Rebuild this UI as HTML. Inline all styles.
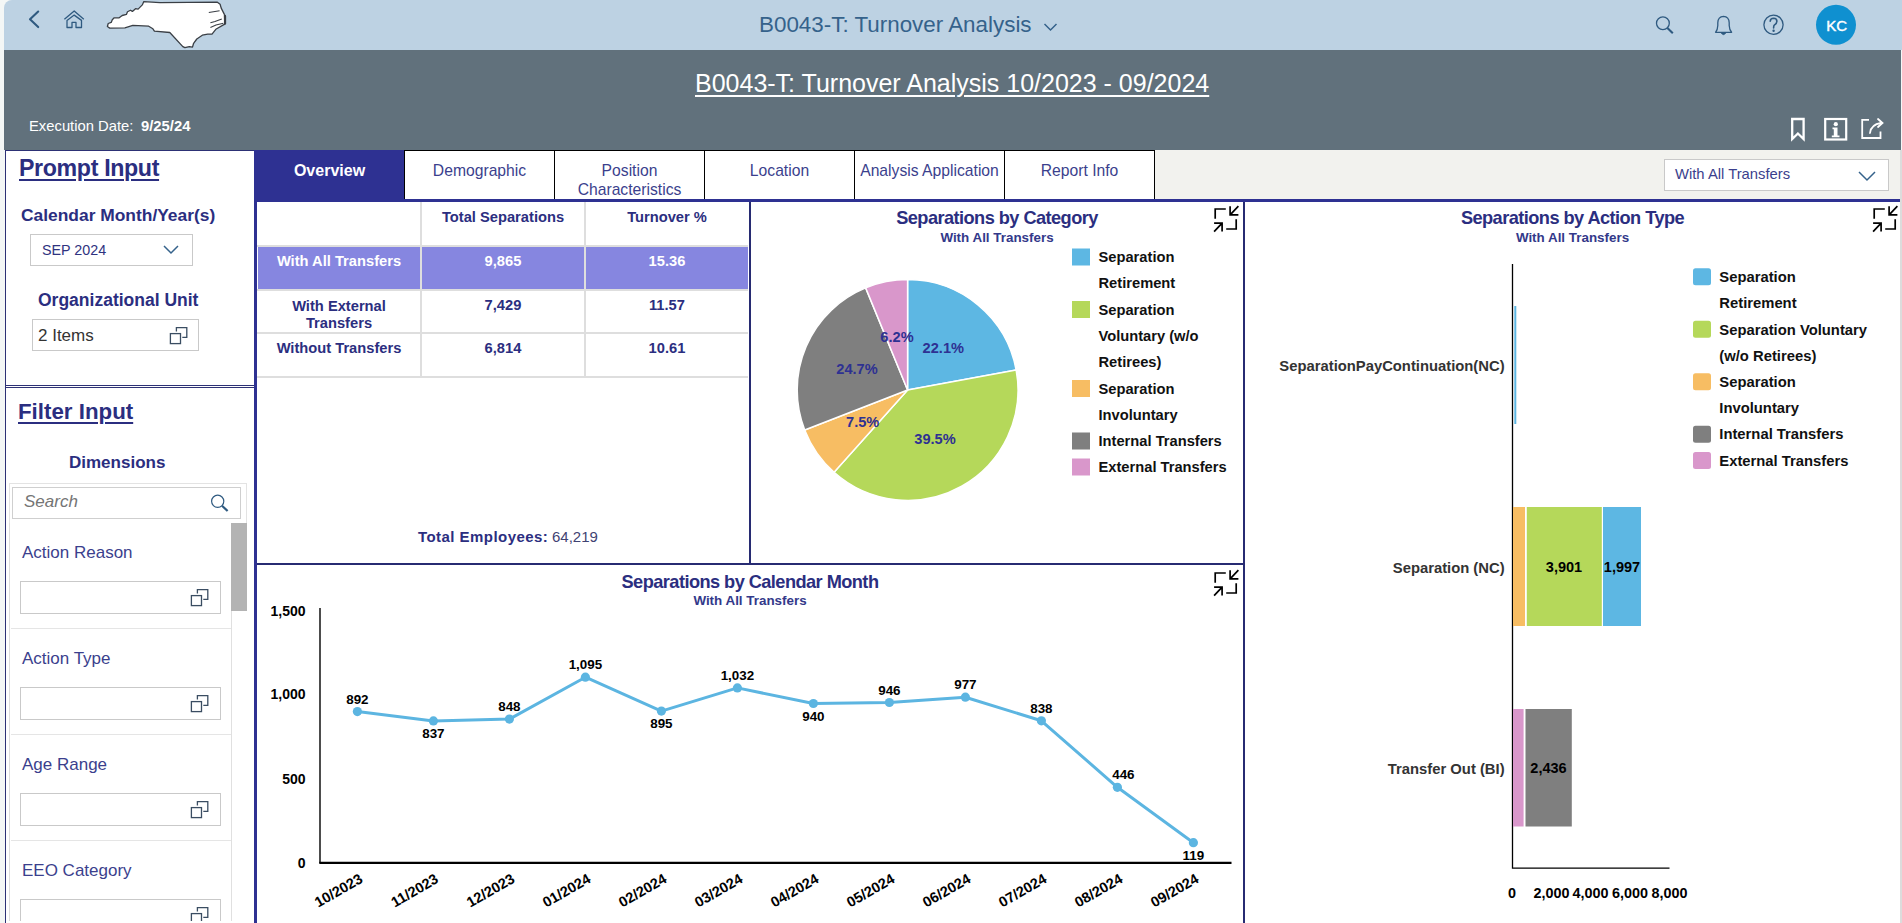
<!DOCTYPE html>
<html><head><meta charset="utf-8">
<style>
*{box-sizing:border-box;margin:0;padding:0}
html,body{width:1902px;height:923px;overflow:hidden;background:#f4f7f6;font-family:"Liberation Sans",sans-serif;position:relative}
.abs{position:absolute}
.t{position:absolute;white-space:nowrap;line-height:1}
#shell{left:4px;top:0;width:1898px;height:50px;background:#bdd2e3;border-top-left-radius:8px}
#band{left:4px;top:50px;width:1897px;height:100px;background:#61717c}
#left{left:5px;top:150px;width:250px;height:773px;background:#fff;border-left:1px solid #2d3175;border-top:1px solid #2d3175}
#tabbar{left:255px;top:150px;width:1646px;height:49px;background:#f2f2ee}
.tab{position:absolute;top:150px;width:151px;height:49px;background:#fff;border:1px solid #000;border-bottom:none;color:#3b3f8d;font-size:15.7px;text-align:center;line-height:19px;padding-top:10px}
#content{left:254px;top:199px;width:1648px;height:724px;background:#fff;border-top:3px solid #2e3192;border-left:3px solid #2e3192}
.db{color:#2b2e80}
.hl{font-weight:bold;color:#2b2e80;text-decoration:underline;text-decoration-thickness:2px;text-underline-offset:3px}
.box{position:absolute;background:#fff;border:1px solid #c9c9c9}
.sep{position:absolute;height:1px;background:#e5e5e5}
.lbl{font-size:17px;color:#3b3f8d}
</style></head><body>
<!-- shell header -->
<div id="shell" class="abs"></div>
<svg class="abs" style="left:0;top:0" width="1902" height="50">
  <path d="M38.2 11.5 L30 19.3 L38.2 27.1" fill="none" stroke="#2f5a80" stroke-width="2.1" stroke-linecap="round" stroke-linejoin="round"/>
  <path d="M64.4 19.2 L74.2 11 L83.8 19.2 M67 27.5 V20.4 L74.2 15.1 L81.5 20.4 V27.5 H76 V22.4 H72 V27.5 Z" fill="none" stroke="#2f5a80" stroke-width="1.3" stroke-linejoin="round"/>
  <path d="M143.8 1.6 L160 2.6 L217.4 2.2 L220.1 4.3 L221.2 8.1 L224.5 14.6 L225.5 16.3 L225.5 23.8 L223.4 24.9 L215.8 29.3 L212 34.1 L207.7 34.1 L202.3 35.2 L196.8 39 L193.6 43.3 L192.5 47.1 L189.3 46.6 L184.9 47.7 L182.8 46.6 L169.8 32.5 L154.4 31.1 L152.9 28.8 L148.7 26.2 L132.8 25.4 L124.9 27.9 L109.7 28.1 L107.4 26.5 L108.2 23.5 L111.2 22.4 L112.3 19.7 L114.2 17.8 L119.2 17.8 L122.2 15.5 L126.4 14.4 L127.5 11.8 L130.5 10.2 L132.4 11.4 L135.5 8.7 L138.1 9.1 L142.3 4.9 Z" fill="#fff" stroke="#3a3f45" stroke-width="1.3" stroke-linejoin="round"/>
  <path d="M208.8 12.5 L219.6 10.8 M210.4 22.8 L215 21.5 L221.8 19 M210.4 27.6 L216 25 L223.4 23.3" fill="none" stroke="#3a3f45" stroke-width="1.1"/>
  <path d="M224.8 15 L225 24" stroke="#3a3f45" stroke-width="2"/>
  <circle cx="1662.9" cy="23.3" r="6.4" fill="none" stroke="#2f5a80" stroke-width="1.3"/>
  <path d="M1667.4 28 L1672.8 33.2" stroke="#2f5a80" stroke-width="2.1" stroke-linecap="butt"/>
  <path d="M1715.6 32.3 L1731.6 32.3 Q1729.4 30 1729.2 25.5 L1729.2 22.8 Q1729 16.5 1723.5 16.3 Q1718 16.5 1717.8 22.8 L1717.8 25.5 Q1717.6 30 1715.6 32.3 Z" fill="none" stroke="#2f5a80" stroke-width="1.3" stroke-linejoin="round"/>
  <path d="M1721.3 33 Q1723.5 36.3 1725.7 33 Z" fill="#2f5a80" stroke="#2f5a80" stroke-width="0.8"/>
  <circle cx="1773.5" cy="24.75" r="9.6" fill="none" stroke="#2f5a80" stroke-width="1.3"/>
  <path d="M1770.2 21.3 Q1770.4 18.3 1773.6 18.3 Q1776.9 18.4 1776.9 21.2 Q1776.9 23.4 1774.3 25.2 Q1773.6 25.8 1773.6 28" fill="none" stroke="#2f5a80" stroke-width="1.6" stroke-linecap="round"/>
  <circle cx="1773.6" cy="30.8" r="1.2" fill="#2f5a80"/>
  <circle cx="1836" cy="24.8" r="20" fill="#0f90d0"/>
</svg>
<div class="t" style="left:759px;top:13.5px;font-size:22.4px;color:#35628b">B0043-T: Turnover Analysis</div>
<svg class="abs" style="left:1043px;top:21.5px" width="16" height="10"><path d="M1.5 2 L7.5 8 L13.5 2" fill="none" stroke="#35628b" stroke-width="1.5"/></svg>
<div class="t" style="left:1826.3px;top:18.2px;font-size:15px;color:#fff;-webkit-text-stroke:0.4px #fff">KC</div>

<!-- band -->
<div id="band" class="abs"></div>
<div class="t" style="left:695px;top:71px;font-size:25px;color:#fff;text-decoration:underline;text-decoration-thickness:2px;text-underline-offset:3px">B0043-T: Turnover Analysis 10/2023 - 09/2024</div>
<div class="t" style="left:29px;top:118.5px;font-size:14.8px;color:#fff">Execution Date:</div>
<div class="t" style="left:141px;top:118.5px;font-size:14.8px;font-weight:bold;color:#fff">9/25/24</div>
<svg class="abs" style="left:1780px;top:110px" width="122" height="40">
  <path d="M12.2 9 H23.6 V29 L17.9 23.5 L12.2 29 Z" fill="none" stroke="#fff" stroke-width="2.3"/>
  <rect x="45.2" y="9" width="21" height="20.5" fill="none" stroke="#fff" stroke-width="2.2"/>
  <circle cx="55.8" cy="14.2" r="2.1" fill="#fff"/>
  <path d="M52.5 17.5 H57.5 V25.5 H59.5 V27.2 H51.8 V25.5 H53.8 V19.2 H52.5 Z" fill="#fff"/>
  <path d="M89 9.8 H82.2 V28 H100.5 V21.5" fill="none" stroke="#fff" stroke-width="1.8"/>
  <path d="M90 23 Q91 14.5 101 13" fill="none" stroke="#fff" stroke-width="1.8" stroke-linecap="round"/>
  <path d="M98 9 L102.5 13 L98 17" fill="none" stroke="#fff" stroke-width="1.8" stroke-linecap="round"/>
</svg>

<!-- left panel -->
<div id="left" class="abs"></div>
<div class="t hl" style="left:19px;top:157px;font-size:23.2px;letter-spacing:-0.35px">Prompt Input</div>
<div class="t" style="left:21px;top:207px;font-size:17.4px;font-weight:bold;color:#2b2e80">Calendar Month/Year(s)</div>
<div class="box" style="left:30px;top:234px;width:163px;height:32px"></div>
<div class="t" style="left:42px;top:242.5px;font-size:14.3px;color:#2f3380">SEP 2024</div>
<svg class="abs" style="left:162px;top:243px" width="20" height="14"><path d="M2 3 L9 10 L16 3" fill="none" stroke="#35628b" stroke-width="1.5"/></svg>
<div class="t" style="left:38px;top:292px;font-size:17.5px;font-weight:bold;color:#2b2e80">Organizational Unit</div>
<div class="box" style="left:32px;top:319px;width:167px;height:32px"></div>
<div class="t" style="left:38px;top:327px;font-size:17px;color:#333">2 Items</div>

<div class="abs" style="left:6px;top:385px;width:249px;height:1px;background:#2d3175"></div>
<div class="abs" style="left:6px;top:387px;width:249px;height:1px;background:#2d3175"></div>
<div class="t hl" style="left:18px;top:401.3px;font-size:22.3px">Filter Input</div>
<div class="t" style="left:69px;top:454px;font-size:17px;font-weight:bold;color:#2b2e80">Dimensions</div>
<div class="abs" style="left:9px;top:483px;width:238px;height:40px;border:1px solid #e3e3e3;border-bottom:none;background:#fff"></div>
<div class="abs" style="left:9px;top:523px;width:1px;height:398px;background:#dcdcdc"></div>
<div class="box" style="left:12px;top:487px;width:229px;height:32px;border-color:#cfcfcf"></div>
<div class="t" style="left:24px;top:493px;font-size:17px;font-style:italic;color:#757575">Search</div>
<svg class="abs" style="left:206px;top:491px" width="26" height="26"><circle cx="11.7" cy="10.3" r="6.1" fill="none" stroke="#2f5a80" stroke-width="1.2"/><path d="M16 14.8 L21.6 20" stroke="#2f5a80" stroke-width="2.2" stroke-linecap="butt"/></svg>
<div class="abs" style="left:231px;top:523px;width:16px;height:88px;background:#b3b3b3"></div>
<div class="abs" style="left:231px;top:611px;width:1px;height:312px;background:#e0e0e0"></div>

<div class="t lbl" style="left:22px;top:544px">Action Reason</div>
<div class="box" style="left:20px;top:581px;width:201px;height:33px"></div>
<div class="sep" style="left:11px;top:628px;width:220px"></div>
<div class="t lbl" style="left:22px;top:650px">Action Type</div>
<div class="box" style="left:20px;top:687px;width:201px;height:33px"></div>
<div class="sep" style="left:11px;top:734px;width:220px"></div>
<div class="t lbl" style="left:22px;top:756px">Age Range</div>
<div class="box" style="left:20px;top:793px;width:201px;height:33px"></div>
<div class="sep" style="left:11px;top:840px;width:220px"></div>
<div class="t lbl" style="left:22px;top:862px">EEO Category</div>
<div class="box" style="left:20px;top:899px;width:201px;height:33px;border-bottom:none"></div>
<svg class="abs" style="left:0;top:0" width="260" height="921">
  <g fill="none" stroke="#3a4d62" stroke-width="1.3">
<path d="M197.4 593.4 V589.6 H207.8 V599.4 H203.3"/><rect x="191.4" y="595.6" width="10.1" height="10"/>
<path d="M197.4 699.4 V695.6 H207.8 V705.4 H203.3"/><rect x="191.4" y="701.6" width="10.1" height="10"/>
<path d="M197.4 805.4 V801.6 H207.8 V811.4 H203.3"/><rect x="191.4" y="807.6" width="10.1" height="10"/>
<path d="M197.4 911.4 V907.6 H207.8 V917.4 H203.3"/><rect x="191.4" y="913.6" width="10.1" height="10"/>
<path d="M176.4 331.4 V327.6 H186.8 V337.4 H182.3"/><rect x="170.4" y="333.6" width="10.1" height="10"/>
  </g>
</svg>

<div class="abs" style="left:6px;top:921px;width:248px;height:2px;background:#fff"></div>
<!-- tabs -->
<div id="tabbar" class="abs"></div>
<div id="content" class="abs"></div>
<div class="tab" style="left:254px;background:#2e3192;color:#fff;font-weight:bold;font-size:16px;border-color:#2e3192">Overview</div>
<div class="tab" style="left:404px">Demographic</div>
<div class="tab" style="left:554px">Position<br>Characteristics</div>
<div class="tab" style="left:704px">Location</div>
<div class="tab" style="left:854px">Analysis Application</div>
<div class="tab" style="left:1004px">Report Info</div>
<div class="box" style="left:1664px;top:159px;width:225px;height:32px;border-color:#c9c9c9"></div>
<div class="t" style="left:1675px;top:167px;font-size:14.8px;color:#3b3f8d">With All Transfers</div>
<svg class="abs" style="left:1856px;top:168px" width="22" height="16"><path d="M3 4 L11 12 L19 4" fill="none" stroke="#35628b" stroke-width="1.5"/></svg>


<!-- panel borders -->
<div class="abs" style="left:749px;top:202px;width:2px;height:363px;background:#272b72"></div>
<div class="abs" style="left:1243px;top:202px;width:2px;height:721px;background:#272b72"></div>
<div class="abs" style="left:257px;top:563px;width:988px;height:2px;background:#272b72"></div>
<div class="abs" style="left:1900px;top:150px;width:2px;height:773px;background:#dcdcdc"></div>

<!-- table -->
<div class="abs" style="left:257px;top:245px;width:491px;height:2px;background:#dedede"></div>
<div class="abs" style="left:257px;top:289px;width:491px;height:2px;background:#dedede"></div>
<div class="abs" style="left:257px;top:332px;width:491px;height:2px;background:#dedede"></div>
<div class="abs" style="left:257px;top:376px;width:491px;height:2px;background:#dedede"></div>
<div class="abs" style="left:420px;top:202px;width:2px;height:176px;background:#dedede"></div>
<div class="abs" style="left:584px;top:202px;width:2px;height:176px;background:#dedede"></div>
<div class="abs" style="left:258px;top:247px;width:162px;height:42px;background:#8686e0"></div>
<div class="abs" style="left:422px;top:247px;width:162px;height:42px;background:#8686e0"></div>
<div class="abs" style="left:586px;top:247px;width:162px;height:42px;background:#8686e0"></div>
<div style="position:absolute;left:0;top:0;font-weight:bold;font-size:14.7px;color:#2b2e80">
<div class="t" style="left:421px;width:164px;text-align:center;top:210px">Total Separations</div>
<div class="t" style="left:585px;width:164px;text-align:center;top:210px">Turnover %</div>
<div class="t" style="left:257px;width:164px;text-align:center;top:254px;color:#fff">With All Transfers</div>
<div class="t" style="left:421px;width:164px;text-align:center;top:254px;color:#fff">9,865</div>
<div class="t" style="left:585px;width:164px;text-align:center;top:254px;color:#fff">15.36</div>
<div class="t" style="left:257px;width:164px;text-align:center;top:298px;line-height:17px;white-space:normal">With External<br>Transfers</div>
<div class="t" style="left:421px;width:164px;text-align:center;top:298px">7,429</div>
<div class="t" style="left:585px;width:164px;text-align:center;top:298px">11.57</div>
<div class="t" style="left:257px;width:164px;text-align:center;top:341px">Without Transfers</div>
<div class="t" style="left:421px;width:164px;text-align:center;top:341px">6,814</div>
<div class="t" style="left:585px;width:164px;text-align:center;top:341px">10.61</div>
</div>
<div class="t" style="left:418px;top:529px;font-size:15px;font-weight:bold;color:#2b2e80;letter-spacing:0.45px">Total Employees:</div>
<div class="t" style="left:552px;top:529px;font-size:15px;color:#3f4272">64,219</div>

<!-- collapse icons -->
<svg class="abs" style="left:0;top:0" width="1902" height="923">
<defs><g id="col"><path d="M1.2 12.8 V3 H11.8 M16.1 0.2 V8.9 H24.4 M16.1 8.9 L24.4 0.2 M0.1 17.1 H8.1 V25.6 M8.1 17.1 L0.1 25.6 M22.2 13.2 V23 H12.2" fill="none" stroke="#000" stroke-width="1.7"/></g></defs>
<use href="#col" x="1214" y="206"/>
<use href="#col" x="1214" y="570"/>
<use href="#col" x="1873" y="206"/>
</svg>

<!-- chart titles -->
<div class="t" style="left:751px;width:492px;text-align:center;top:209px;font-size:18.2px;letter-spacing:-0.55px;font-weight:bold;color:#2b2e80">Separations by Category</div>
<div class="t" style="left:751px;width:492px;text-align:center;top:231px;font-size:13.4px;font-weight:bold;color:#33398a">With All Transfers</div>
<div class="t" style="left:257px;width:986px;text-align:center;top:573px;font-size:18.2px;letter-spacing:-0.55px;font-weight:bold;color:#2b2e80">Separations by Calendar Month</div>
<div class="t" style="left:257px;width:986px;text-align:center;top:594px;font-size:13.4px;font-weight:bold;color:#33398a">With All Transfers</div>
<div class="t" style="left:1245px;width:655px;text-align:center;top:209px;font-size:18.2px;letter-spacing:-0.55px;font-weight:bold;color:#2b2e80">Separations by Action Type</div>
<div class="t" style="left:1245px;width:655px;text-align:center;top:231px;font-size:13.4px;font-weight:bold;color:#33398a">With All Transfers</div>

<!-- pie -->
<svg class="abs" style="left:0;top:0" width="1902" height="923" font-family="Liberation Sans" font-weight="bold">
<path d="M907.6 390 L907.60 279.60 A110.4 110.4 0 0 1 1016.17 369.99 Z" fill="#5db7e3" stroke="#fff" stroke-width="1.5" stroke-linejoin="round"/>
<path d="M907.6 390 L1016.17 369.99 A110.4 110.4 0 0 1 834.07 472.35 Z" fill="#b5d85a" stroke="#fff" stroke-width="1.5" stroke-linejoin="round"/>
<path d="M907.6 390 L834.07 472.35 A110.4 110.4 0 0 1 804.70 430.00 Z" fill="#f7bd63" stroke="#fff" stroke-width="1.5" stroke-linejoin="round"/>
<path d="M907.6 390 L804.70 430.00 A110.4 110.4 0 0 1 865.67 287.87 Z" fill="#7f7f7f" stroke="#fff" stroke-width="1.5" stroke-linejoin="round"/>
<path d="M907.6 390 L865.67 287.87 A110.4 110.4 0 0 1 907.60 279.60 Z" fill="#d997cb" stroke="#fff" stroke-width="1.5" stroke-linejoin="round"/>
<g fill="#2e3192" font-size="14.6" text-anchor="middle">
<text x="943.3" y="353">22.1%</text>
<text x="935" y="444">39.5%</text>
<text x="862.7" y="427">7.5%</text>
<text x="857" y="374">24.7%</text>
<text x="897" y="342">6.2%</text>
</g>
<g font-size="14.7" fill="#111">
<rect x="1072" y="248.5" width="18" height="17" fill="#5db7e3"/>
<text x="1098.5" y="262">Separation</text><text x="1098.5" y="288">Retirement</text>
<rect x="1072" y="301" width="18" height="17" fill="#b5d85a"/>
<text x="1098.5" y="314.5">Separation</text><text x="1098.5" y="340.5">Voluntary (w/o</text><text x="1098.5" y="366.5">Retirees)</text>
<rect x="1072" y="380" width="18" height="17" fill="#f7bd63"/>
<text x="1098.5" y="393.5">Separation</text><text x="1098.5" y="419.5">Involuntary</text>
<rect x="1072" y="432.5" width="18" height="17" fill="#7f7f7f"/>
<text x="1098.5" y="446">Internal Transfers</text>
<rect x="1072" y="458.5" width="18" height="17" fill="#d997cb"/>
<text x="1098.5" y="472">External Transfers</text>
</g>
</svg>

<!-- line chart -->
<svg class="abs" style="left:0;top:0" width="1902" height="923" font-family="Liberation Sans" font-weight="bold">
<path d="M320 608 V862.9" fill="none" stroke="#000" stroke-width="1.4"/><path d="M319.3 862.9 H1231.5" fill="none" stroke="#000" stroke-width="2.2"/>
<g font-size="14" text-anchor="end" fill="#000"><text x="305.5" y="615.5">1,500</text><text x="305.5" y="699">1,000</text><text x="305.5" y="783.5">500</text><text x="305.5" y="868">0</text></g>
<polyline points="357.4,711.6 433.4,720.9 509.4,719.1 585.4,677.2 661.4,711.1 737.4,687.9 813.4,703.5 889.4,702.5 965.4,697.2 1041.4,720.8 1117.4,787.3 1193.4,842.7" fill="none" stroke="#5cb5e1" stroke-width="3" stroke-linejoin="round"/>
<circle cx="357.4" cy="711.6" r="4.6" fill="#5cb5e1"/>
<circle cx="433.4" cy="720.9" r="4.6" fill="#5cb5e1"/>
<circle cx="509.4" cy="719.1" r="4.6" fill="#5cb5e1"/>
<circle cx="585.4" cy="677.2" r="4.6" fill="#5cb5e1"/>
<circle cx="661.4" cy="711.1" r="4.6" fill="#5cb5e1"/>
<circle cx="737.4" cy="687.9" r="4.6" fill="#5cb5e1"/>
<circle cx="813.4" cy="703.5" r="4.6" fill="#5cb5e1"/>
<circle cx="889.4" cy="702.5" r="4.6" fill="#5cb5e1"/>
<circle cx="965.4" cy="697.2" r="4.6" fill="#5cb5e1"/>
<circle cx="1041.4" cy="720.8" r="4.6" fill="#5cb5e1"/>
<circle cx="1117.4" cy="787.3" r="4.6" fill="#5cb5e1"/>
<circle cx="1193.4" cy="842.7" r="4.6" fill="#5cb5e1"/>
<g font-size="13.4" text-anchor="middle" fill="#000">
<text x="357.4" y="703.6">892</text>
<text x="433.4" y="737.9">837</text>
<text x="509.4" y="711.1">848</text>
<text x="585.4" y="669.2">1,095</text>
<text x="661.4" y="728.1">895</text>
<text x="737.4" y="679.9">1,032</text>
<text x="813.4" y="720.5">940</text>
<text x="889.4" y="694.5">946</text>
<text x="965.4" y="689.2">977</text>
<text x="1041.4" y="712.8">838</text>
<text x="1123.4" y="779.3">446</text>
<text x="1193.4" y="859.7">119</text>
</g><g font-size="14.5" text-anchor="middle" fill="#000">
<text transform="translate(338.5 890.4) rotate(-30)" x="0" y="5">10/2023</text>
<text transform="translate(414.5 890.4) rotate(-30)" x="0" y="5">11/2023</text>
<text transform="translate(490.5 890.4) rotate(-30)" x="0" y="5">12/2023</text>
<text transform="translate(566.5 890.4) rotate(-30)" x="0" y="5">01/2024</text>
<text transform="translate(642.5 890.4) rotate(-30)" x="0" y="5">02/2024</text>
<text transform="translate(718.5 890.4) rotate(-30)" x="0" y="5">03/2024</text>
<text transform="translate(794.5 890.4) rotate(-30)" x="0" y="5">04/2024</text>
<text transform="translate(870.5 890.4) rotate(-30)" x="0" y="5">05/2024</text>
<text transform="translate(946.5 890.4) rotate(-30)" x="0" y="5">06/2024</text>
<text transform="translate(1022.5 890.4) rotate(-30)" x="0" y="5">07/2024</text>
<text transform="translate(1098.5 890.4) rotate(-30)" x="0" y="5">08/2024</text>
<text transform="translate(1174.5 890.4) rotate(-30)" x="0" y="5">09/2024</text>
</g></svg>
<!-- bar chart -->
<svg class="abs" style="left:0;top:0" width="1902" height="923" font-family="Liberation Sans" font-weight="bold">
<path d="M1512.5 264 V868.2 H1669.5" fill="none" stroke="#000" stroke-width="1.3"/>
<rect x="1514.3" y="306" width="2" height="118" fill="#5db7e3"/>
<rect x="1513" y="507" width="12" height="119" fill="#f7bd63"/>
<rect x="1526.8" y="507" width="75" height="119" fill="#b5d85a"/>
<rect x="1603" y="507" width="38" height="119" fill="#5db7e3"/>
<rect x="1513" y="709" width="10.6" height="117.5" fill="#d997cb"/>
<rect x="1525.5" y="709" width="46.3" height="117.5" fill="#7f7f7f"/>
<g font-size="14.8" text-anchor="end" fill="#333"><text x="1504.6" y="371">SeparationPayContinuation(NC)</text><text x="1504.6" y="572.5">Separation (NC)</text><text x="1504.6" y="773.5">Transfer Out (BI)</text></g>
<g font-size="14.5" text-anchor="middle" fill="#000"><text x="1564" y="572">3,901</text><text x="1622" y="572">1,997</text><text x="1548.5" y="773">2,436</text></g>
<g font-size="14.4" text-anchor="middle" fill="#000"><text x="1512" y="898">0</text><text x="1551.5" y="898">2,000</text><text x="1590.5" y="898">4,000</text><text x="1630" y="898">6,000</text><text x="1669.5" y="898">8,000</text></g>
<g font-size="14.8" fill="#111">
<rect x="1693" y="268.3" width="18" height="17" rx="2.5" fill="#5db7e3"/>
<text x="1719.3" y="282.0">Separation</text>
<text x="1719.3" y="308.2">Retirement</text>
<rect x="1693" y="320.8" width="18" height="17" rx="2.5" fill="#b5d85a"/>
<text x="1719.3" y="334.5">Separation Voluntary</text>
<text x="1719.3" y="360.7">(w/o Retirees)</text>
<rect x="1693" y="373.2" width="18" height="17" rx="2.5" fill="#f7bd63"/>
<text x="1719.3" y="386.9">Separation</text>
<text x="1719.3" y="413.1">Involuntary</text>
<rect x="1693" y="425.7" width="18" height="17" rx="2.5" fill="#7f7f7f"/>
<text x="1719.3" y="439.4">Internal Transfers</text>
<rect x="1693" y="451.9" width="18" height="17" rx="2.5" fill="#d997cb"/>
<text x="1719.3" y="465.6">External Transfers</text>
</g></svg>
</body></html>
